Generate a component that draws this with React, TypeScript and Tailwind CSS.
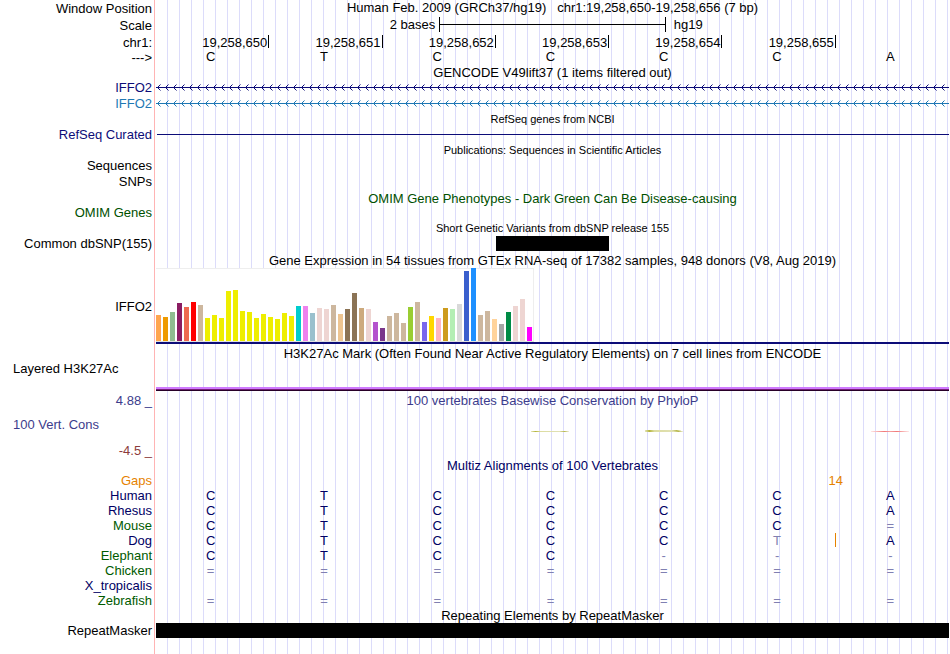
import type { ReactNode } from "react";
import clsx from "clsx";

const POSITIONS = ["19,258,650", "19,258,651", "19,258,652", "19,258,653", "19,258,654", "19,258,655", ""];
const BASES = ["C", "T", "C", "C", "C", "C", "A"];

const SPECIES = [
  { name: "Human", color: "text-[#000064]", bases: "CTCCCCA" },
  { name: "Rhesus", color: "text-[#000064]", bases: "CTCCCCA" },
  { name: "Mouse", color: "text-[#005a00]", bases: "CTCCCC=" },
  { name: "Dog", color: "text-[#000064]", bases: "CTCCCtA", insertAfter: 5 },
  { name: "Elephant", color: "text-[#005a00]", bases: "CTCC---" },
  { name: "Chicken", color: "text-[#005a00]", bases: "=======" },
  { name: "X_tropicalis", color: "text-[#000064]", bases: "       " },
  { name: "Zebrafish", color: "text-[#005a00]", bases: "=======" },
];

// [height, color] per GTEx tissue
const TISSUES: [number, string][] = [
  [26, "#ffa54f"], [24, "#ee9a00"], [29, "#8fbc8f"], [38, "#8b1c62"], [34, "#ee6a50"], [39, "#ff0000"],
  [36, "#cdb79e"], [23, "#eeee00"], [26, "#eeee00"], [23, "#eeee00"], [50, "#eeee00"], [51, "#eeee00"],
  [30, "#eeee00"], [29, "#eeee00"], [23, "#eeee00"], [27, "#eeee00"], [24, "#eeee00"], [22, "#eeee00"],
  [28, "#eeee00"], [25, "#eeee00"], [35, "#00cdcd"], [35, "#ee82ee"], [28, "#9ac0cd"], [33, "#eed5d2"],
  [32, "#eed5d2"], [36, "#cdb79e"], [27, "#eec591"], [32, "#8b7355"], [48, "#8b7355"], [33, "#cdaa7d"],
  [32, "#eed5d2"], [19, "#b452cd"], [13, "#7a378b"], [25, "#cdb79e"], [28, "#cdb79e"], [18, "#cdb79e"],
  [34, "#9acd32"], [39, "#cdb79e"], [19, "#7a67ee"], [25, "#ffd700"], [23, "#ffb6c1"], [33, "#cd9b1d"],
  [32, "#b4eeb4"], [37, "#d9d9d9"], [70, "#3a5fcd"], [73, "#1e90ff"], [26, "#cdb79e"], [30, "#cdb79e"],
  [22, "#ffd39b"], [17, "#a6a6a6"], [29, "#008b45"], [35, "#eed5d2"], [42, "#eed5d2"], [14, "#ff00ff"],
];

const SIDE =
  "w-[156px] shrink-0 bg-white bg-[linear-gradient(#ffb4b4,#ffb4b4)] bg-[length:1px_100%] bg-[position:154px_0] bg-no-repeat";

type RowProps = {
  label?: ReactNode;
  labelClass?: string;
  className: string;
  children?: ReactNode;
};

function Row({ label, labelClass = "items-start justify-end pr-1", className, children }: RowProps) {
  return (
    <div className={clsx("flex", className)}>
      <div className={clsx(SIDE, "flex whitespace-nowrap", labelClass)}>{label}</div>
      <div className="min-w-0 flex-1 pr-px">{children}</div>
    </div>
  );
}

function Title({ className = "h-4", small, children }: { className?: string; small?: boolean; children: ReactNode }) {
  return (
    <Row className={className}>
      <h2 className={clsx("flex h-full items-end justify-center whitespace-pre", small && "text-[11px]")}>
        {children}
      </h2>
    </Row>
  );
}

function Transcript({ id, color }: { id: string; color: string }) {
  return (
    <svg className="block h-[15px] w-full" shapeRendering="crispEdges">
      <defs>
        <pattern id={id} width="8" height="15" patternUnits="userSpaceOnUse">
          <path d="M1 7h1v1h-1zM2 6h1v1h-1zM2 8h1v1h-1zM3 5h1v1h-1zM3 9h1v1h-1z" fill={color} />
          <path d="M4 4h1v1h-1zM4 10h1v1h-1z" fill={color} opacity="0.5" />
        </pattern>
      </defs>
      <rect width="100%" height="15" fill={`url(#${id})`} />
      <rect y="7" width="100%" height="1" fill={color} />
    </svg>
  );
}

function ExpressionChart() {
  return (
    <svg className="block h-[74px] w-[378px] bg-white" shapeRendering="crispEdges" role="img" aria-label="IFFO2 expression">
      <path d="M0 0h378v74h-1V1H0z" fill="#eeeeee" />
      <rect y="73" width="378" height="1" fill="#e0e0e0" />
      {TISSUES.map(([height, color], i) => (
        <rect key={i} x={i * 7} y={73 - height} width="5" height={height} fill={color} />
      ))}
    </svg>
  );
}

function Wiggle({ id, stops, thick }: { id: string; stops: [string, string][]; thick?: boolean }) {
  return (
    <svg className="block h-[3px] w-[40px]" viewBox="0 0 40 3">
      <defs>
        <linearGradient id={id}>
          {stops.map(([offset, color]) => (
            <stop key={offset} offset={offset} stopColor={color} />
          ))}
        </linearGradient>
      </defs>
      <rect x="1" y="1" width="38" height="1" fill={`url(#${id})`} />
      {thick && <path d="M1 0h36v1H1z" fill={`url(#${id})`} />}
    </svg>
  );
}

const OLIVE: [string, string][] = [
  ["0%", "#e6e6be"],
  ["12%", "#b4b43c"],
  ["25%", "#dcdca0"],
  ["75%", "#e1e1b4"],
  ["88%", "#b9b950"],
  ["100%", "#f0f0dc"],
];
const RED: [string, string][] = [
  ["0%", "#ffe6e6"],
  ["35%", "#f07878"],
  ["50%", "#f5a0a0"],
  ["68%", "#f07878"],
  ["100%", "#ffe6e6"],
];

function baseClass(base: string) {
  return base === "=" || base === "-" || base === "t" ? "text-[#8080b2]" : "text-[#000064]";
}

function Alignments() {
  return (
    <div className="pr-px">
      <table className="w-full table-fixed border-collapse leading-[15px]">
        <tbody>
          <tr className="h-[15px] text-[#e68200]">
            <th scope="row" className={clsx(SIDE, "p-0 pr-1 text-right font-normal")}>
              Gaps
            </th>
            {BASES.map((_, i) => (
              <td key={i} className="relative p-0">
                {i === 5 && <span className="absolute top-0 right-0 translate-x-1/2">14</span>}
              </td>
            ))}
          </tr>
          {SPECIES.map((row) => (
            <tr key={row.name} className="h-[15px]">
              <th scope="row" className={clsx(SIDE, "p-0 pr-1 text-right font-normal", row.color)}>
                {row.name}
              </th>
              {row.bases.split("").map((base, i) => (
                <td key={i} className={clsx("relative p-0 pr-1 text-center", baseClass(base))}>
                  {base.toUpperCase()}
                  {row.insertAfter === i && <span className="absolute top-0 right-0 h-[14px] w-px bg-[#e68200]" />}
                </td>
              ))}
            </tr>
          ))}
        </tbody>
      </table>
    </div>
  );
}

export default function App() {
  return (
    <main className="flex min-h-screen flex-col bg-white bg-[linear-gradient(to_right,#dcdcfa_1px,transparent_1px)] bg-[length:12px_100%] bg-[position:11px_0] font-['Liberation_Sans',Arial,sans-serif] text-[13px] leading-[15px] text-black">
      <Row label="Window Position" labelClass="items-center justify-end pr-1" className="h-[17px]">
        <h1 className="text-center whitespace-pre">Human Feb. 2009 (GRCh37/hg19)   chr1:19,258,650-19,258,656 (7 bp)</h1>
      </Row>

      {/* Scale bar spans two bases */}
      <Row label="Scale" labelClass="items-center justify-end pr-1" className="h-4">
        <div className="grid grid-cols-14 items-center">
          <span className="col-span-5 pr-1 text-right">2 bases</span>
          <div className="col-span-4 flex h-[15px] items-center border-x border-black">
            <div className="h-px w-full bg-black" />
          </div>
          <span className="col-span-5 pl-2">hg19</span>
        </div>
      </Row>
      <Row label="chr1:" labelClass="items-end justify-end pr-1" className="h-[17px]">
        <div className="grid h-full grid-cols-7 items-center">
          {POSITIONS.map((pos, i) => (
            <div key={i} className={clsx("flex h-[13px] items-start justify-end pr-px", pos && "border-r border-black")}>
              {pos}
            </div>
          ))}
        </div>
      </Row>
      <Row label="--->" className="h-4">
        <div className="grid grid-cols-7 leading-[14px]">
          {BASES.map((base, i) => (
            <span key={i} className="pr-1 text-center">
              {base}
            </span>
          ))}
        </div>
      </Row>

      {/* Genes */}
      <Title className="h-[14px]">GENCODE V49lift37 (1 items filtered out)</Title>
      <Row label="IFFO2" labelClass="items-start justify-end pr-1 text-[#0c0c78]" className="h-4">
        <Transcript id="coding" color="#0c0c78" />
      </Row>
      <Row label="IFFO2" labelClass="items-start justify-end pr-1 text-[#1e78b4]" className="h-4">
        <Transcript id="noncoding" color="#1e78b4" />
      </Row>
      <Title className="h-[15px]" small>
        RefSeq genes from NCBI
      </Title>
      <Row label="RefSeq Curated" labelClass="items-center justify-end pr-1 text-[#0c0c78]" className="h-[15px]">
        <div className="flex h-full items-center pl-px">
          <div className="h-px w-full bg-[#0c0c78]" />
        </div>
      </Row>

      {/* Literature and variants */}
      <Title small>Publications: Sequences in Scientific Articles</Title>
      <Row label="Sequences" className="h-4" />
      <Row label="SNPs" className="h-4" />
      <Title>
        <span className="text-[#005000]">OMIM Gene Phenotypes - Dark Green Can Be Disease-causing</span>
      </Title>
      <Row label="OMIM Genes" labelClass="items-end justify-end pr-1 text-[#005000]" className="h-[14px]" />
      <Title small>Short Genetic Variants from dbSNP release 155</Title>
      <Row label="Common dbSNP(155)" className="h-[15px]">
        <div className="grid h-full grid-cols-7">
          <div className="col-start-4 bg-black" />
        </div>
      </Row>

      {/* Expression */}
      <Title className="h-[17px]">Gene Expression in 54 tissues from GTEx RNA-seq of 17382 samples, 948 donors (V8, Aug 2019)</Title>
      <Row label="IFFO2" labelClass="items-center justify-end pr-1" className="h-[76px]">
        <ExpressionChart />
        <div className="h-0.5 bg-[#0c0c78]" />
      </Row>

      {/* Regulation */}
      <Title className="h-[17px]">H3K27Ac Mark (Often Found Near Active Regulatory Elements) on 7 cell lines from ENCODE</Title>
      <Row label="Layered H3K27Ac" labelClass="items-start pl-[13px]" className="h-[30px]">
        <div className="flex h-full flex-col justify-end">
          <div className="h-0.5 bg-[#d07aff]" />
          <div className="h-px bg-[#782078]" />
          <div className="h-px bg-[#280028]" />
        </div>
      </Row>

      {/* Conservation */}
      <Row label="4.88 _" labelClass="items-center justify-end pr-1 text-[#3c3c8c]" className="h-[18px]">
        <h2 className="flex h-full items-center justify-center text-[#3c3c8c]">
          100 vertebrates Basewise Conservation by PhyloP
        </h2>
      </Row>
      <Row label="100 Vert. Cons" labelClass="items-center pl-[13px] text-[#3c3c8c]" className="h-[30px]">
        <div className="grid h-full grid-cols-7 items-end justify-items-center pb-1.5">
          <div className="col-start-4 pr-1">
            <Wiggle id="cons653" stops={OLIVE} />
          </div>
          <div className="pr-1">
            <Wiggle id="cons654" stops={OLIVE} thick />
          </div>
          <div className="col-start-7 pr-1">
            <Wiggle id="cons656" stops={RED} />
          </div>
        </div>
      </Row>
      <Row label="-4.5 _" labelClass="items-end justify-end pr-1 text-[#8c3c3c]" className="h-[19px]" />

      <Title className="h-[15px]">
        <span className="text-[#000064]">Multiz Alignments of 100 Vertebrates</span>
      </Title>
      <Alignments />

      <Title className="h-[15px]">Repeating Elements by RepeatMasker</Title>
      <Row label="RepeatMasker" className="h-[15px]">
        <div className="h-full bg-black" />
      </Row>
      <Row className="flex-1" />
    </main>
  );
}
